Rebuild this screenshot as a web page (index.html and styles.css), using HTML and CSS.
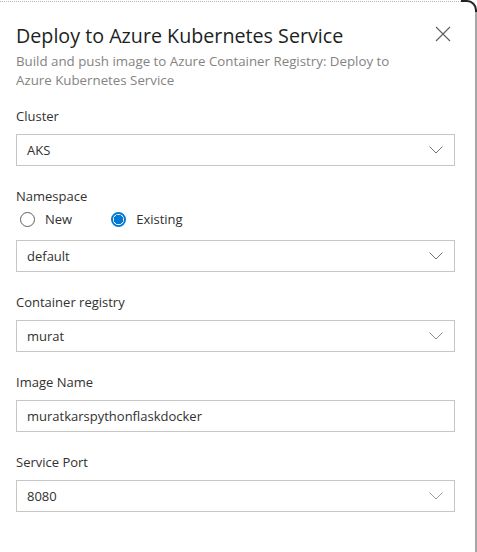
FILE: index.html
```html
<!DOCTYPE html>
<html>
<head>
<meta charset="utf-8">
<link rel="stylesheet" href="styles.css">
</head>
<body>
<div class="panel">
  <div class="corner"></div>
  <div class="header">
    <div class="titles">
      <h1 class="title">Deploy to Azure Kubernetes Service</h1>
      <p class="subtitle">Build and push image to Azure Container Registry: Deploy to Azure Kubernetes Service</p>
    </div>
    <button class="close" aria-label="Close">
      <svg width="16" height="16" viewBox="0 0 16 16"><path d="M1 1L15 15M15 1L1 15" stroke="#605e5c" stroke-width="1.1" fill="none"/></svg>
    </button>
  </div>

  <div class="field first">
    <div class="label">Cluster</div>
    <div class="select"><span>AKS</span><svg class="chev" width="14" height="8" viewBox="0 0 14 8"><path d="M0.5 0.5L7 7L13.5 0.5" stroke="#707070" stroke-width="1" fill="none"/></svg></div>
  </div>

  <div class="field">
    <div class="label">Namespace</div>
    <div class="radios">
      <label class="radio"><span class="dot"></span>New</label>
      <label class="radio checked"><span class="dot"></span>Existing</label>
    </div>
    <div class="select"><span>default</span><svg class="chev" width="14" height="8" viewBox="0 0 14 8"><path d="M0.5 0.5L7 7L13.5 0.5" stroke="#707070" stroke-width="1" fill="none"/></svg></div>
  </div>

  <div class="field">
    <div class="label">Container registry</div>
    <div class="select"><span>murat</span><svg class="chev" width="14" height="8" viewBox="0 0 14 8"><path d="M0.5 0.5L7 7L13.5 0.5" stroke="#8a8a8a" stroke-width="1" fill="none"/></svg></div>
  </div>

  <div class="field">
    <div class="label">Image Name</div>
    <div class="select"><span>muratkarspythonflaskdocker</span></div>
  </div>

  <div class="field">
    <div class="label">Service Port</div>
    <div class="select"><span>8080</span><svg class="chev" width="14" height="8" viewBox="0 0 14 8"><path d="M0.5 0.5L7 7L13.5 0.5" stroke="#a0a0a0" stroke-width="1" fill="none"/></svg></div>
  </div>
</div>
</body>
</html>
```
FILE: styles.css
```css
html, body {
  margin: 0;
  padding: 0;
  background: #ffffff;
}
body {
  font-family: "Open Sans", "Noto Sans", sans-serif;
  color: #323130;
}
.panel {
  position: relative;
  box-sizing: border-box;
  width: 477px;
  height: 552px;
  padding: 0 20px 0 16px;
  border-top: 1px dotted #b8b8b8;
  border-right: 2px solid #a6a6a6;
  border-top-right-radius: 10px;
  margin-top: 1px;
}
.corner {
  position: absolute;
  top: -2px;
  right: -2px;
  width: 14px;
  height: 10px;
  border-top: 2px solid #222;
  border-right: 2px solid #222;
  border-top-right-radius: 10px;
}
.header {
  display: flex;
  justify-content: space-between;
  align-items: flex-start;
  padding-top: 21px;
}
.title {
  margin: 0;
  font-size: 19.7px;
  font-weight: 400;
  line-height: 26px;
  color: #201f1e;
}
.subtitle {
  margin: 3px 0 0;
  width: 395px;
  font-size: 13.3px;
  line-height: 19px;
  color: #858381;
}
.close {
  border: 0;
  background: none;
  padding: 0;
  margin: 3px 4px 0 0;
  width: 16px;
  height: 16px;
}
.close svg { display: block; }
.field { margin-top: 20px; }
.field.first { margin-top: 16px; }
.label {
  font-size: 13px;
  line-height: 20px;
  margin-bottom: 8px;
}
.select {
  box-sizing: border-box;
  height: 32px;
  border: 1px solid #c8c6c4;
  display: flex;
  align-items: center;
  justify-content: space-between;
  padding: 0 10px 0 10px;
  font-size: 13px;
}
.chev { margin-right: 1px; }
.radios {
  display: flex;
  gap: 39px;
  margin: -6px 0 10px 4px;
  height: 22px;
  align-items: center;
}
.radio {
  display: flex;
  align-items: center;
  font-size: 13px;
  gap: 10px;
}
.dot {
  box-sizing: border-box;
  width: 15px;
  height: 15px;
  border-radius: 50%;
  border: 1px solid #605e5c;
}
.radio.checked .dot {
  border: 2px solid #0078d4;
  background: radial-gradient(circle, #0078d4 0 4.5px, #ffffff 5px);
}
```
